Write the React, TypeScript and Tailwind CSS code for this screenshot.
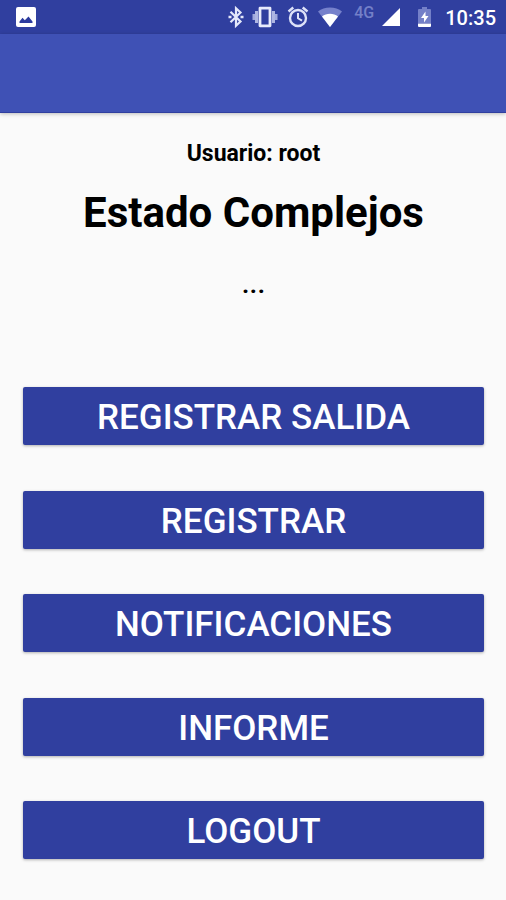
import React from 'react';

const actions = ['Registrar salida', 'Registrar', 'Notificaciones', 'Informe', 'Logout'];

const PictureIcon = () => (
  <svg viewBox="0 0 20 20" className="h-5 w-5" aria-hidden="true">
    <rect width="20" height="20" rx="2" fill="#fff" />
    <path d="M3.5 16v-1.5l3-3.7 2.3 2.4 3.700-3.700 4 5V16z" fill="#2c3b9e" />
  </svg>
);

const BluetoothIcon = () => (
  <svg viewBox="0 0 24 24" className="h-6 w-6" fill="none" stroke="#e4e8fa" strokeWidth="2.2" aria-hidden="true">
    <path d="M6.500 6.800l10 9.700-4.500 4.300V3.200l4.500 4.300-10 9.700" />
    <path d="M4.500 12h3M16.500 12h3" strokeWidth="2.600" />
  </svg>
);

const VibrateIcon = () => (
  <svg viewBox="0 0 26 22" className="h-[22px] w-[26px]" aria-hidden="true">
    <path d="M8 2.200h10v17.600H8z" fill="none" stroke="#e8ebfb" strokeWidth="2.800" strokeLinejoin="round" />
    <path d="M4.500 5v12M21.500 5v12" stroke="#aeb6e2" strokeWidth="3" />
    <path d="M1.800 8v6M24.200 8v6" stroke="#a0a9dc" strokeWidth="2.600" />
  </svg>
);

const AlarmIcon = () => (
  <svg viewBox="0 0 24 24" className="h-6 w-6" fill="none" stroke="#dde2f8" strokeWidth="2.400" aria-hidden="true">
    <circle cx="12" cy="13" r="8" />
    <path d="M2.500 6.500L7.300 2.500M21.500 6.500l-4.800-4" />
    <path d="M12 8v5.300l4 2.400" strokeWidth="2" />
  </svg>
);

const WifiIcon = () => (
  <svg viewBox="0 0 24 20" className="h-5 w-6" aria-hidden="true">
    <path d="M12 20L0 4.500C3.200 2 7.400.6 12 .6S20.800 2 24 4.500z" fill="#7681cb" />
    <path d="M12 20L4 9.500C6.200 7.700 9 6.800 12 6.800s5.800.9 8 2.700z" fill="#fff" />
  </svg>
);

const SignalIcon = () => (
  <svg viewBox="0 0 18 18" className="h-[18px] w-[18px]" aria-hidden="true">
    <path d="M18 0v18H0z" fill="#fff" />
  </svg>
);

const BatteryIcon = () => (
  <svg viewBox="0 0 13 20" className="h-5 w-[13px]" aria-hidden="true">
    <path d="M4 0h5v2h3q1 0 1 1v13H0V3q0-1 1-1h3z" fill="#7480c8" />
    <path d="M0 16.500h13V19q0 1-1 1H1q-1 0-1-1z" fill="#fff" />
    <path d="M7.500 4.500L3 11h3v4.500L10.500 9h-3z" fill="#fff" />
  </svg>
);

const StatusBar = () => (
  <div className="flex h-[34px] items-center justify-between bg-[#303f9f] pl-4 pr-[10px] text-white">
    <PictureIcon />
    <div className="flex items-center">
      <BluetoothIcon />
      <div className="ml-1 mr-2">
        <VibrateIcon />
      </div>
      <AlarmIcon />
      <div className="ml-2 mr-3">
        <WifiIcon />
      </div>
      <span className="mb-2 text-base leading-4 font-medium text-[#7480c8]">4G</span>
      <div className="ml-2 mr-[18px]">
        <SignalIcon />
      </div>
      <BatteryIcon />
      <span className="ml-[14px] pt-[2px] text-xl font-medium">10:35</span>
    </div>
  </div>
);

const App = () => {
  return (
    <div className="flex min-h-screen flex-col bg-[#fafafa] font-[Roboto,sans-serif]">
      <StatusBar />
      <header className="h-[79px] border-b border-[#303f9f] bg-[#3f51b5] shadow-[0_1px_4px_rgba(0,0,0,0.25)]" />

      <main className="flex flex-1 flex-col pt-[25px] pr-[22px] pb-[41px] pl-[23px] text-center text-black">
        <p className="text-[23px] leading-8 font-bold">Usuario: root</p>
        <h1 className="mt-4 text-[42px] leading-[54px] font-bold">Estado Complejos</h1>
        <p className="mt-7 text-[28px] leading-8 font-medium">...</p>

        <div className="mt-[87px] flex flex-1 flex-col justify-between gap-4">
          {actions.map((action) => (
            <button
              key={action}
              type="button"
              className="h-[58px] w-full rounded-xs bg-[#303f9f] pt-1 text-[35px] leading-10 font-medium text-white uppercase shadow-[0_1px_3px_rgba(0,0,0,0.3)]"
            >
              {action}
            </button>
          ))}
        </div>
      </main>
    </div>
  );
};

export default App;
